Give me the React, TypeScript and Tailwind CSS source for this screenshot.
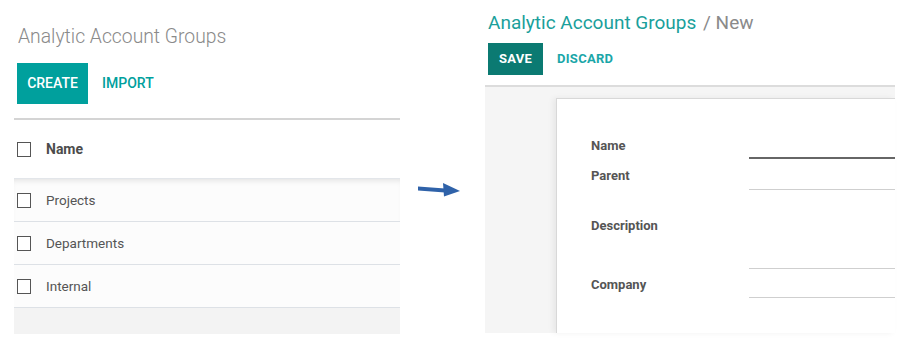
import React from 'react';

const rows = ['Projects', 'Departments', 'Internal'];

function Checkbox() {
  return <div className="w-[14px] h-[15px] border border-[#555] bg-white shrink-0" />;
}

function ListPanel() {
  return (
    <div className="w-[386px] ml-[14px] flex flex-col">
      <h1 className="pl-[4px] pt-[21px] text-[21px] leading-[30px] font-light text-[#8a8a8a]">
        <span className="inline-block origin-left scale-x-[0.92]">Analytic Account Groups</span>
      </h1>
      <div className="flex items-center gap-[14px] mt-[12px] ml-[3px]">
        <button className="h-[41px] w-[71px] bg-[#00a09d] text-white text-[14px] font-medium">CREATE</button>
        <button className="text-[#00a09d] text-[14px] font-medium">IMPORT</button>
      </div>
      <div className="mt-[14px] h-[2px] bg-[#d4d4d4]" />
      <div className="h-[59px] flex items-center gap-[15px] pl-[3px] border-b border-[#e3e6ea]">
        <Checkbox />
        <span className="text-[14px] font-bold text-[#4c4c4c]">Name</span>
      </div>
      {rows.map((r, i) => (
        <div
          key={r}
          className={`h-[43px] flex items-center gap-[15px] pl-[3px] border-b border-[#dde1e6] bg-[#fcfcfc] ${
            i === 0 ? 'shadow-[inset_0_5px_6px_-4px_rgba(0,0,0,0.12)]' : ''
          }`}
        >
          <Checkbox />
          <span className="text-[13.5px] pt-[1px] text-[#555]">{r}</span>
        </div>
      ))}
      <div className="h-[26px] bg-[#f3f3f3]" />
    </div>
  );
}

function Arrow() {
  return (
    <div className="w-[85px] flex justify-center">
      <svg width="44" height="16" viewBox="0 0 44 16" className="mt-[182px] -ml-[8px]">
        <path d="M1 4.5 L28 6.5 L28 10.5 L1 8.5 Z" fill="#2f62a9" />
        <path d="M26 1 L43 9 L27 14.5 Z" fill="#2f62a9" />
      </svg>
    </div>
  );
}

const fields = [
  { label: 'Name', h: 'h-[25px]', mt: 'mt-[2px]', line: 'border-b-2 border-[#666]' },
  { label: 'Parent', h: 'h-[31px]', mt: 'mt-[7px]', line: 'border-b border-[#cfcfcf]' },
  { label: 'Description', h: 'h-[79px]', mt: 'mt-[26px]', line: 'border-b border-[#cfcfcf]' },
  { label: 'Company', h: 'h-[29px]', mt: 'mt-[6px]', line: 'border-b border-[#cfcfcf]' },
];

function FormPanel() {
  return (
    <div className="w-[410px] flex flex-col">
      <h1 className="pl-[3px] pt-[9px] text-[19px] leading-[28px] text-[#1a9f9b]">
        Analytic Account Groups <span className="text-[#8a8a8a] ml-[2px]">/ New</span>
      </h1>
      <div className="flex items-center gap-[14px] mt-[6px] ml-[3px]">
        <button className="h-[32px] w-[55px] bg-[#0b7a72] text-white text-[13px] font-bold tracking-[0.3px]">SAVE</button>
        <button className="text-[#1aa6a8] text-[13px] font-bold tracking-[0.3px]">DISCARD</button>
      </div>
      <div className="mt-[10px] h-[2px] bg-[#dcdcdc]" />
      <div className="h-[246px] bg-[#f5f5f5] pl-[71px] pt-[11px]">
        <div className="h-full bg-white border-l border-t border-[#d8d8d8] shadow-[-3px_0_6px_rgba(0,0,0,0.06)] pl-[34px] pt-[35px]">
          {fields.map((f) => (
            <div key={f.label} className={`flex ${f.h}`}>
              <span className={`w-[158px] ${f.mt} self-start text-[13px] leading-[20px] font-bold text-[#555]`}>
                {f.label}
              </span>
              <div className={`flex-1 ${f.line}`} />
            </div>
          ))}
        </div>
      </div>
    </div>
  );
}

export default function App() {
  return (
    <div className="w-[914px] h-[354px] bg-white flex font-['Roboto',sans-serif]">
      <ListPanel />
      <Arrow />
      <FormPanel />
    </div>
  );
}
